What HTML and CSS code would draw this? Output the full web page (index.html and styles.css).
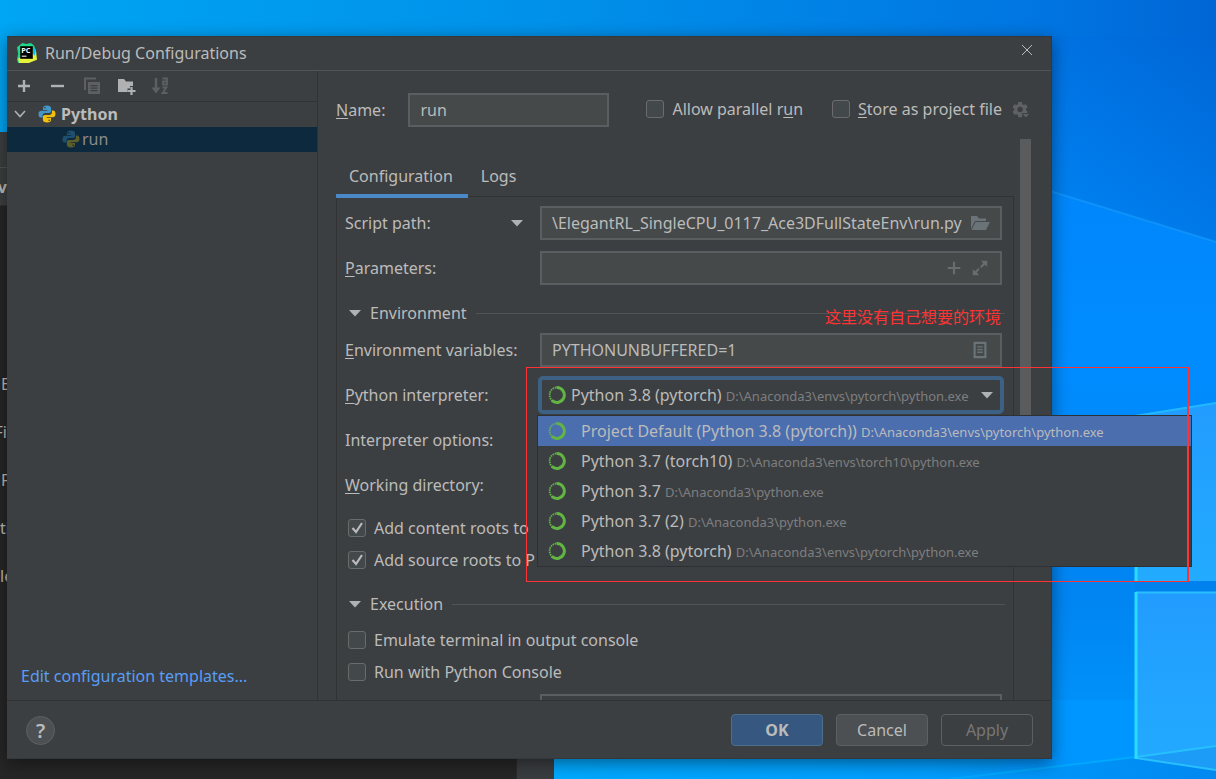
FILE: index.html
```html
<!DOCTYPE html>
<html lang="en">
<head>
<meta charset="utf-8">
<title>Run/Debug Configurations</title>
<link rel="stylesheet" href="styles.css">
</head>
<body>
<svg width="0" height="0" class="defs" aria-hidden="true">
  <defs>
    <symbol id="python" viewBox="0 0 18 18">
      <path fill="#4296c8" d="M9 .5C6 .5 5 1.500 5 3.200V5h4.300v.7H3.200C1.400 5.700.5 7 .5 9.200s1 3.400 2.600 3.400h1.500v-2c0-1.500 1.200-2.500 2.600-2.500h3.900c1.200 0 2-.9 2-2V3.200C13.100 1.300 11.500.5 9 .5zM6.900 2a.8.8 0 1 1 0 1.600.8.8 0 0 1 0-1.600z"/>
      <path fill="#f2bf0a" d="M9 17.500c3 0 4-1 4-2.700V13H8.700v-.7h6.100c1.800 0 2.700-1.300 2.700-3.500s-1-3.400-2.600-3.400h-1v2.200c0 1.500-1.200 2.400-2.600 2.400H7c-1.200 0-2.100.9-2.100 2v2.800c0 1.900 1.600 2.700 4.100 2.700zm2.100-1.500a.8.8 0 1 1 0-1.600.8.8 0 0 1 0 1.600z"/>
    </symbol>
    <symbol id="ring" viewBox="0 0 18 18">
      <path d="M8.500 1.600a7.400 7.400 0 1 1-4.600 12.800" fill="none" stroke="#62b543" stroke-width="3"/>
      <path d="M4.600 15A7.600 7.600 0 0 1 8.500 1.400" fill="none" stroke="#62b543" stroke-width="1.800" stroke-dasharray="1.500 .8"/>
    </symbol>
    <symbol id="down" viewBox="0 0 12 8"><path d="M0 1h12L6 7.500z" fill="#afb1b3"/></symbol>
  </defs>
</svg>

<div class="desktop">
  <svg class="wallpaper" viewBox="0 0 1216 779" preserveAspectRatio="none" aria-hidden="true">
    <defs>
      <linearGradient id="sky"><stop offset="0" stop-color="#00a5f3"/><stop offset=".45" stop-color="#0091ea"/><stop offset=".85" stop-color="#0076e2"/><stop offset="1" stop-color="#0066d6"/></linearGradient>
      <linearGradient id="dusk" x1="1" y1="0" x2=".4" y2="1"><stop offset="0" stop-color="#0066d6"/><stop offset="1" stop-color="#0080f0"/></linearGradient>
      <linearGradient id="low" x1="0" y1="0" x2="0" y2="1"><stop offset="0" stop-color="#0086fa"/><stop offset=".3" stop-color="#008cff"/><stop offset=".7" stop-color="#0085f2"/><stop offset="1" stop-color="#0099ff"/></linearGradient>
      <linearGradient id="floor"><stop offset="0" stop-color="#00abff"/><stop offset=".6" stop-color="#009eff"/><stop offset="1" stop-color="#0088f0"/></linearGradient>
      <linearGradient id="pane" x1="0" y1="0" x2="0" y2="1"><stop offset="0" stop-color="#229cff"/><stop offset="1" stop-color="#22abff"/></linearGradient>
    </defs>
    <rect width="1216" height="779" fill="url(#sky)"/>
    <path d="M1051 36H1216V242L1051 192z" fill="url(#dusk)"/>
    <path d="M1000 176 1216 242V779H1000z" fill="url(#low)"/>
    <path d="M1040 188 1216 242" stroke="#0e92fa" stroke-width="2"/>
    <path d="M500 740H1136V757L1216 770V779H500z" fill="url(#floor)"/>
    <path d="M1040 700H1136V757L1000 770z" fill="#0096ff"/>
    <path d="M950 779 1136 757" stroke="#00a8ff" stroke-width="2"/>
    <path d="M1135 416 1216 403V581H1135z" fill="url(#pane)"/>
    <path d="M1135 416 1216 403" stroke="#22b8ff" stroke-width="2"/>
    <path d="M1135 581H1216V592H1135z" fill="#0082ee"/>
    <path d="M1135 592H1216V770L1135 758z" fill="url(#pane)"/>
    <path d="M1136 757 1216 746V770z" fill="#1c9cf7"/>
    <path d="M1136 592.500H1216M1136 757 1216 746M1136 758 1216 770" fill="none" stroke="#28bfff" stroke-width="2"/>
    <path d="M1136 416V581M1136 592V759" stroke="#2bdcff" stroke-width="3"/>
  </svg>

  <div class="ide" aria-hidden="true">
    <div class="ide-bar"></div>
    <div class="ide-tab"><b>v</b></div>
    <div class="ide-text"><span>E</span><span class="cut">Fi</span><span>F</span><span class="start">ti</span><span class="start">le</span></div>
    <div class="ide-edge"></div>
  </div>

  <main class="dialog">
    <header class="title">
      <svg class="logo" viewBox="0 0 20 20" aria-hidden="true">
        <path d="M1 5 6 1l4 1 4-1 3 2 2 5-2 4 1 5-6 3-5-1-5 1L1 17l1-6z" fill="#21d789"/>
        <path d="m13 8 6 0 1 9-8 3-9 0-1-4z" fill="#e6f23c"/>
        <path d="m16 4 3 4-1 5-2-2z" fill="#07c3f2"/>
        <path d="M4 4h12v12H4z" fill="#000"/>
        <text x="5" y="10" class="logo-text">PC</text>
        <path d="M5.500 13.500h4.500" stroke="#fff"/>
      </svg>
      <h1>Run/Debug Configurations</h1>
      <button class="close" aria-label="Close"><svg viewBox="0 0 10 10"><path d="m0 0 10 10M10 0 0 10" stroke="#bbb" stroke-width="1"/></svg></button>
    </header>

    <div class="body">
      <aside class="side">
        <div class="tools">
          <button aria-label="Add"><svg viewBox="0 0 18 18"><path d="M9 3v12M3 9h12" stroke="#afb1b3" stroke-width="2.400"/></svg></button>
          <button aria-label="Remove"><svg viewBox="0 0 18 18"><path d="M2 9h13" stroke="#afb1b3" stroke-width="2.400"/></svg></button>
          <button aria-label="Copy" disabled><svg viewBox="0 0 18 18"><path d="M2 13V1.500h11" fill="none" stroke="#5d5f61" stroke-width="2"/><path d="M5 5h12v12H5zM7.500 8v1.200h7V8zm0 2.600v1.200h7v-1.200zm0 2.500v1.200h7v-1.200z" fill="#5d5f61" fill-rule="evenodd"/></svg></button>
          <button aria-label="New folder"><svg viewBox="0 0 18 18"><path d="M1 2h6l2 2.500h7V9h-3v2.500h-2.500V15H1z" fill="#afb1b3"/><path d="M14.500 10v8M10.500 14h8" stroke="#afb1b3" stroke-width="2.200"/></svg></button>
          <button aria-label="Sort" disabled><svg viewBox="0 0 18 18"><path d="M5 1v12" stroke="#5d5f61" stroke-width="2.400"/><path d="M.5 10.500h9L5 16.500z" fill="#5d5f61"/><path d="M11.500 1.500H16V7.500h-4V4.500H16M11.500 10.500h4l-4 5.500h5" fill="none" stroke="#5d5f61" stroke-width="1.800"/></svg></button>
        </div>
        <div class="tree">
          <div class="node"><svg class="chev" viewBox="0 0 12 8"><path d="m1 1 5 5.500L11 1" fill="none" stroke="#afb1b3" stroke-width="1.600"/></svg><svg class="i18"><use href="#python"/></svg><b>Python</b></div>
          <div class="node leaf"><svg class="i18 dim"><use href="#python"/></svg><span>run</span></div>
        </div>
        <a class="templates" href="#">Edit configuration templates...</a>
      </aside>

      <section class="main">
        <div class="top">
          <label for="name"><u>N</u>ame:</label>
          <input id="name" class="field name" value="run">
          <label class="check parallel"><input type="checkbox"><span>Allow parallel r<u>u</u>n</span></label>
          <label class="check store"><input type="checkbox"><span><u>S</u>tore as project file</span></label>
          <button class="gear" aria-label="Store options"><svg viewBox="0 0 20 20"><path d="M7 1h4l.5 2.500 1.500.9 2.400-.8 2 3.400-1.900 1.600v1.800l1.900 1.600-2 3.400-2.400-.8-1.500.9L11 18H7l-.5-2.500-1.500-.9-2.400.8-2-3.400 1.900-1.600V8.600L.6 7l2-3.400 2.400.8 1.500-.9zM9 6.500a3 3 0 1 0 0 6 3 3 0 0 0 0-6z" fill="#5f6163" fill-rule="evenodd"/><path d="M11 14h9l-4.500 5z" fill="#5f6163" stroke="#3c3f41"/></svg></button>
        </div>

        <div class="scroll">
          <div class="content">
            <div class="tabs" role="tablist">
              <button role="tab" aria-selected="true" class="tab on">Configuration</button>
              <button role="tab" aria-selected="false" class="tab">Logs</button>
            </div>
            <form class="panel">
              <div class="rows">
                <div class="row"><label for="script">Script path:</label><button type="button" class="kind" aria-label="Target type"><svg><use href="#down"/></svg></button>
                  <div class="field wrap"><input id="script" value="\ElegantRL_SingleCPU_0117_Ace3DFullStateEnv\run.py"><button type="button" aria-label="Browse"><svg viewBox="0 0 20 16"><path d="M1 14V1h6l2 2.500h7V6H5z" fill="#6a7377"/><path d="M5.500 7H20l-4 8H1.500z" fill="#6a7377"/></svg></button></div></div>
                <div class="row"><label for="params"><u>P</u>arameters:</label>
                  <div class="field wrap"><input id="params"><button type="button" aria-label="Insert macro"><svg viewBox="0 0 20 20"><path d="M10 3v14M3 10h14" stroke="#686d70" stroke-width="2.400"/></svg></button><button type="button" aria-label="Expand"><svg viewBox="0 0 20 20"><path d="M11 2h7v7l-2.500-2.500-4 3.500-1.500-1.500 3.500-4zM2 11l2.500 2.500L8 10l1.500 1.500L6.500 15 9 18H2z" fill="#686d70"/></svg></button></div></div>
              </div>
              <h2 class="group"><svg><use href="#down"/></svg>Environment</h2>
              <div class="rows">
                <div class="row"><label for="vars"><u>E</u>nvironment variables:</label>
                  <div class="field wrap"><input id="vars" value="PYTHONUNBUFFERED=1"><button type="button" aria-label="Edit variables"><svg viewBox="0 0 20 20"><path d="M4 2h12v16H4z" fill="none" stroke="#6a7377" stroke-width="2.400"/><path d="M7 6.500h6M7 9.500h6M7 12.500h6" stroke="#6a7377" stroke-width="1.400"/></svg></button></div></div>
                <div class="row"><label id="interp"><u>P</u>ython interpreter:</label>
                  <div class="combo">
                    <button type="button" class="combo-btn" role="combobox" aria-expanded="true" aria-controls="list" aria-labelledby="interp"><svg class="i18"><use href="#ring"/></svg><span class="value">Python 3.8 (pytorch) <small>D:\Anaconda3\envs\pytorch\python.exe</small></span><svg class="arrow"><use href="#down"/></svg></button>
                    <ul id="list" class="popup" role="listbox">
                      <li role="option" aria-selected="true"><svg class="i18"><use href="#ring"/></svg><span>Project Default (Python 3.8 (pytorch)) <small>D:\Anaconda3\envs\pytorch\python.exe</small></span></li>
                      <li role="option"><svg class="i18"><use href="#ring"/></svg><span>Python 3.7 (torch10) <small>D:\Anaconda3\envs\torch10\python.exe</small></span></li>
                      <li role="option"><svg class="i18"><use href="#ring"/></svg><span>Python 3.7 <small>D:\Anaconda3\python.exe</small></span></li>
                      <li role="option"><svg class="i18"><use href="#ring"/></svg><span>Python 3.7 (2) <small>D:\Anaconda3\python.exe</small></span></li>
                      <li role="option"><svg class="i18"><use href="#ring"/></svg><span>Python 3.8 (pytorch) <small>D:\Anaconda3\envs\pytorch\python.exe</small></span></li>
                    </ul>
                  </div></div>
                <div class="row"><span>Interpreter options:</span></div>
                <div class="row"><span><u>W</u>orking directory:</span></div>
              </div>
              <div class="checks first">
                <label class="check"><input type="checkbox" checked><span>Add content roots to</span></label>
                <label class="check"><input type="checkbox" checked><span>Add source roots to P</span></label>
              </div>
              <h2 class="group"><svg><use href="#down"/></svg>Execution</h2>
              <div class="checks last">
                <label class="check"><input type="checkbox"><span>Emulate terminal in output console</span></label>
                <label class="check"><input type="checkbox"><span>Run with Python Console</span></label>
              </div>
              <div class="row"><span></span><input class="field redirect" aria-label="Redirect input from" disabled></div>
            </form>
          </div>
          <div class="bar"><div class="thumb"></div></div>
        </div>
      </section>
    </div>

    <footer class="foot">
      <button class="help" aria-label="Help">?</button>
      <button class="btn ok">OK</button>
      <button class="btn">Cancel</button>
      <button class="btn off" disabled>Apply</button>
    </footer>
  </main>

  <div class="mark" lang="zh-CN"><p>这里没有自己想要的环境</p></div>
</div>
</body>
</html>
```

FILE: styles.css
```css
* { box-sizing: border-box; }
body { margin: 0; }
body, button, input { font-family: "Noto Sans", "Open Sans", "Noto Sans CJK SC", sans-serif; font-size: 16px; color: #bbbbbb; }
button { background: none; border: 0; padding: 0; display: flex; align-items: center; justify-content: center; }
h1, h2, p, ul { margin: 0; padding: 0; font-size: 16px; font-weight: 400; }
ul { list-style: none; }
u { text-underline-offset: 2px; text-decoration-thickness: 1px; }
small { font-size: 13px; color: #7c7e80; }
svg { display: block; flex: none; }
.defs { position: absolute; }
.i18 { width: 18px; height: 18px; }

.desktop { position: relative; height: 100vh; overflow: hidden; line-height: 22px; }
.wallpaper { position: absolute; width: 100%; height: 100%; }

/* Editor window behind the dialog */
.ide { position: absolute; left: 0; top: 132px; bottom: 0; width: 554px; background: #262626; }
.ide-bar { height: 36px; background: #3c3f41; border-bottom: 1px solid #515355; }
.ide-tab { height: 38px; background: #3c3f41; border-bottom: 1px solid #2f3133; line-height: 38px; width: 7px; display: flex; justify-content: flex-end; }
.ide-text { padding-top: 154px; width: 7px; display: flex; flex-direction: column; line-height: 48px; }
.ide-text span { padding-left: 1px; }
.ide-text .cut { display: flex; justify-content: flex-end; padding: 0; }
.ide-text .start { padding: 0; }
.ide-edge { position: absolute; right: 0; bottom: 0; width: 38px; height: 100%; background: #3a3d40; border-left: 1px solid #2b2b2b; }

/* Dialog window */
.dialog { position: absolute; inset: 36px 164px 20px 7px; display: flex; flex-direction: column; background: #3c3f41; border: 1px solid #34383b; border-left: 0; box-shadow: 0 4px 16px rgba(0, 0, 0, .45); }
.title { height: 34px; display: flex; align-items: center; gap: 8px; padding: 0 19px 2px 9px; border-bottom: 1px solid #515355; }
.title h1 { flex: 1; }
.logo { width: 21px; height: 21px; }
.logo-text { font: 700 7px "Open Sans", sans-serif; fill: #fff; }
.close { width: 10px; height: 10px; margin-bottom: 6px; }
.close svg { width: 10px; height: 10px; }

.body { flex: 1; min-height: 0; display: flex; }
.side { width: 311px; display: flex; flex-direction: column; border-right: 1px solid #323232; }
.tools { height: 31px; display: flex; gap: 16px; padding: 0 8px; border-bottom: 1px solid #323232; align-items: center; }
.tools svg { width: 18px; height: 18px; overflow: visible; }
.tree { flex: 1; }
.node { height: 25px; display: flex; align-items: center; gap: 5px; padding: 0 0 2px 7px; }
.node .chev { width: 12px; height: 8px; margin-right: 7px; }
.leaf { background: #0d293e; padding-left: 55px; gap: 2px; color: #8c8c8c; }
.dim { opacity: .35; }
.templates { color: #589df6; text-decoration: none; padding: 0 14px 13px; }

.main { flex: 1; min-width: 0; display: flex; flex-direction: column; padding-left: 18px; }
.top { height: 68px; display: flex; align-items: center; padding: 10px 16px 0 0; }
.field { height: 34px; background: #45494a; border: 2px solid #5b5e60; padding: 0 10px; outline: 0; }
.name { width: 201px; margin: 0 37px 0 23px; }
.check { display: flex; align-items: center; gap: 8px; white-space: nowrap; }
.check input { appearance: none; width: 18px; height: 18px; margin: 0; border: 1px solid #6b6b6b; border-radius: 3px; background: #43494a; }
.check input:checked { background: #43494a url("data:image/svg+xml,%3Csvg xmlns='http://www.w3.org/2000/svg' viewBox='0 0 16 16'%3E%3Cpath d='m3.500 8 3.500 4 6-9' fill='none' stroke='%23bbbbbb' stroke-width='2.200'/%3E%3C/svg%3E") center / 16px 16px; }
.top .check { padding-bottom: 2px; }
.parallel { margin-right: 29px; }
.gear { margin-left: 10px; }
.gear svg { width: 18px; height: 18px; }

.scroll { flex: 1; min-height: 0; display: flex; gap: 6px; overflow-x: visible; overflow-y: clip; padding-right: 20px; }
.content { flex: 1; min-width: 0; padding-top: 16px; }
.tabs { position: relative; height: 43px; display: flex; }
.tab { height: 43px; padding: 2px 14px 0 13px; border-bottom: 4px solid transparent; }
.tab.on { border-color: #4a88c7; padding-right: 15px; }
.panel { border: 1px solid #323232; margin-top: -2px; padding: 9px 11px 0 8px; }
.rows { display: flex; flex-direction: column; gap: 11px; }
.row { display: flex; align-items: center; height: 34px; }
.row > :first-child { width: 195px; flex: none; }
.kind { width: 12px; margin-left: -29px; margin-right: 17px; }
.kind svg, .group svg, .arrow { width: 12px; height: 8px; }
.wrap { flex: 1; min-width: 0; display: flex; align-items: center; gap: 6px; }
.wrap input { flex: 1; min-width: 0; border: 0; padding: 0; background: none; outline: 0; }
.wrap button, .wrap svg { width: 20px; height: 18px; }
.group { height: 48px; padding-top: 8px; padding-left: 4px; margin-right: -3px; display: flex; align-items: center; gap: 9px; }
.group::after { content: ""; flex: 1; border-top: 1px solid #515355; }
.checks { display: grid; grid-auto-rows: 32px; padding-left: 3px; }
.first { padding-top: 10px; }
.last { padding-bottom: 6px; }
.redirect { flex: 1; background: #3c3f41; }

.combo { flex: 1; min-width: 0; position: relative; margin: 0 -2px; }
.combo-btn { width: 100%; height: 38px; border: 4px solid #3d6185; border-radius: 5px; justify-content: flex-start; gap: 5px; padding: 0 7px 0 6px; }
.value { flex: 1; min-width: 0; overflow: hidden; white-space: nowrap; text-align: left; margin-right: 3px; }
.popup { position: absolute; z-index: 2; left: -1px; top: 39px; width: 655px; background: #3c3f41; border: 1px solid #2e3133; }
.popup li { height: 30px; display: flex; align-items: center; gap: 15px; padding-left: 10px; white-space: nowrap; }
.popup li[aria-selected="true"] { background: #4b6eaf; }
.popup li[aria-selected="true"] small { color: #bbbbbb; }

.bar { width: 11px; }
.thumb { height: 300px; background: #5a5b5c; }

.foot { height: 58px; display: flex; align-items: center; gap: 13px; padding: 1px 18px 0 19px; border-top: 1px solid #323232; }
.help { width: 29px; height: 29px; border-radius: 50%; border: 1px solid #5e6060; background: #4c5052; font-size: 20px; font-weight: 600; margin-right: auto; }
.btn { width: 92px; height: 32px; border: 1px solid #5e6060; border-radius: 4px; background: #4c5052; }
.ok { background: #365880; border-color: #4c708c; font-weight: 700; }
.off { background: none; color: #777777; }

/* Red note and frame drawn over the windows */
.mark { position: absolute; z-index: 3; left: 526px; top: 367px; width: 663px; height: 215px; border: 1px solid #ff3333; border-right-width: 2px; pointer-events: none; }
.mark p { position: absolute; right: 186px; bottom: 100%; margin-bottom: 41px; color: #ff3333; white-space: nowrap; font-family: "Noto Sans CJK SC", sans-serif; }
```
